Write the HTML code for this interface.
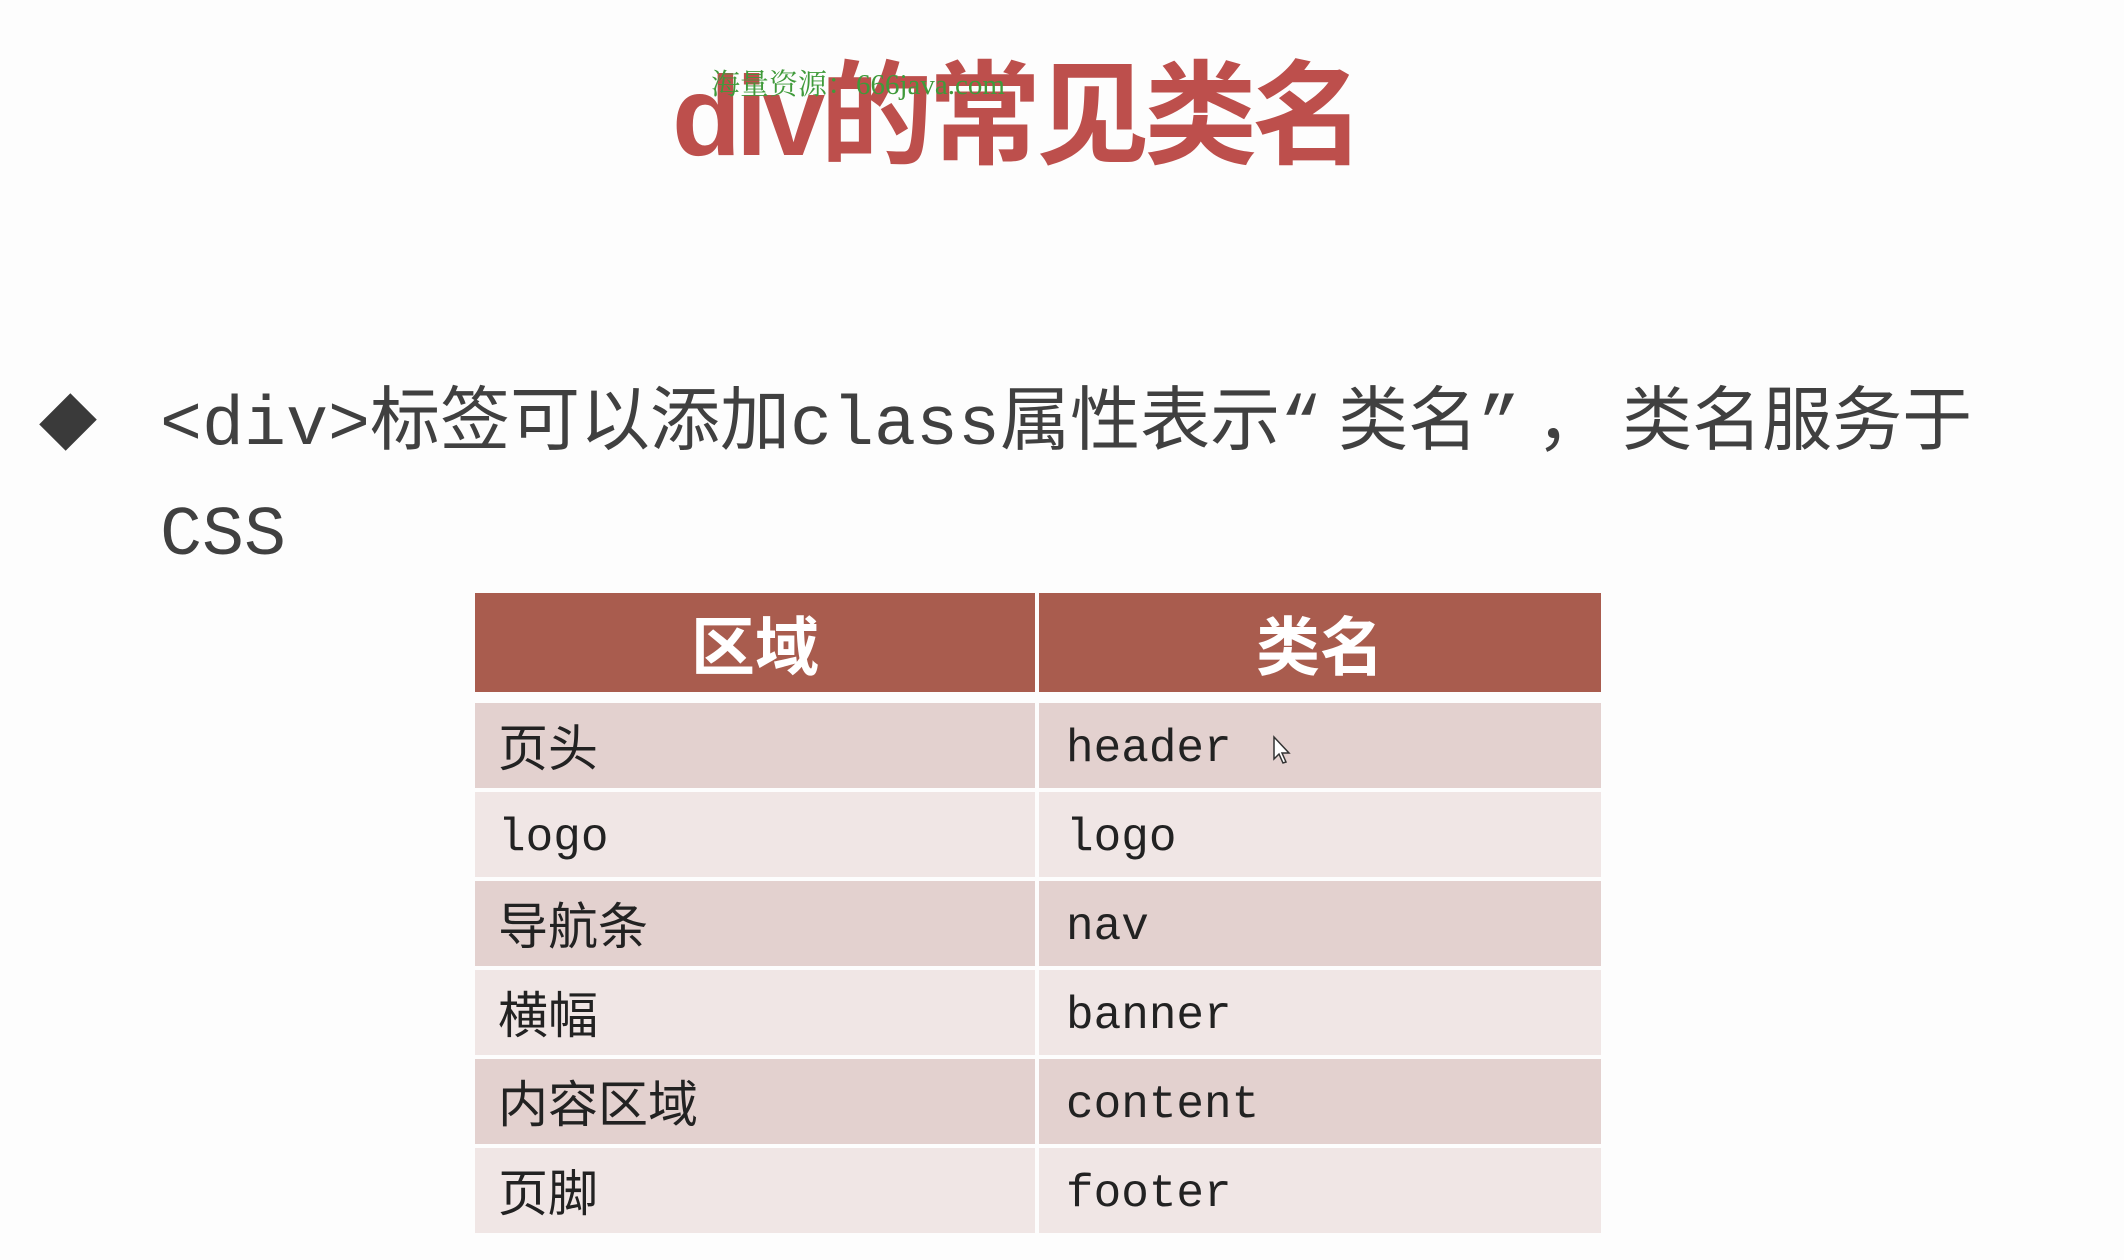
<!DOCTYPE html>
<html><head><meta charset="utf-8"><style>
html,body{margin:0;padding:0;background:#fdfdfd;}
body{width:2124px;height:1260px;position:relative;overflow:hidden;font-family:"Liberation Sans","Noto Sans CJK SC",sans-serif;}
.title{position:absolute;left:672px;top:46px;font-size:113px;font-weight:bold;color:#bd4f4c;letter-spacing:-5px;line-height:140px;white-space:nowrap;}
.wm{position:absolute;left:711px;top:62px;font-size:29px;color:#3f9a3a;font-family:"Liberation Serif","Noto Serif CJK SC",serif;white-space:nowrap;}
.dia{position:absolute;left:46px;top:400px;width:44px;height:44px;background:#3a3a3a;transform:rotate(45deg) scale(0.85,1.0);}
.line{position:absolute;left:160px;font-size:70px;color:#404040;font-family:"Liberation Mono","Noto Sans CJK SC",monospace;white-space:nowrap;line-height:90px;}
.q{letter-spacing:16px;}
.tbl{position:absolute;left:475px;top:593px;width:1126px;}
.row{display:flex;height:88px;margin-bottom:1px;}
.c{box-sizing:border-box;display:flex;align-items:center;}
.c1{width:560px;margin-right:4px;padding-left:23px;font-size:50px;}
.c2{flex:1;padding-left:27px;padding-top:6px;}
.h .c{background:#a95c4e;color:#fff;font-weight:bold;font-size:64px;justify-content:center;padding:0;height:99px;}
.h{height:99px;margin-bottom:11px;}
.r{font-size:46px;color:#222;font-family:"Liberation Mono","Noto Sans CJK SC",monospace;}
.r .c{height:85px;}
.row.r{height:85px;margin-bottom:4px;}
.o .c{background:#e3d1cf;}
.e .c{background:#f0e6e5;}
</style></head><body>
<div class="title">div的常见类名</div>
<div class="wm">海量资源：666java.com</div>
<div class="dia"></div>
<div class="line" style="top:382px">&lt;div&gt;标签可以添加class属性表示<span class="q">“</span>类名<span class="q">”，</span>类名服务于</div>
<div class="line" style="top:492px">CSS</div>
<div class="tbl">
<div class="row h"><div class="c c1">区域</div><div class="c c2">类名</div></div>
<div class="row r o"><div class="c c1">页头</div><div class="c c2">header</div></div>
<div class="row r e"><div class="c c1" style="padding-top:6px;font-size:46px">logo</div><div class="c c2">logo</div></div>
<div class="row r o"><div class="c c1">导航条</div><div class="c c2">nav</div></div>
<div class="row r e"><div class="c c1">横幅</div><div class="c c2">banner</div></div>
<div class="row r o"><div class="c c1">内容区域</div><div class="c c2">content</div></div>
<div class="row r e"><div class="c c1">页脚</div><div class="c c2">footer</div></div>
</div>
<svg style="position:absolute;left:1272px;top:735px" width="20" height="30" viewBox="0 0 20 30"><path d="M2 2 L2 24 L7 19 L11 28 L14 27 L10 18 L17 18 Z" fill="#fff" stroke="#333" stroke-width="1.5"/></svg>
</body></html>
